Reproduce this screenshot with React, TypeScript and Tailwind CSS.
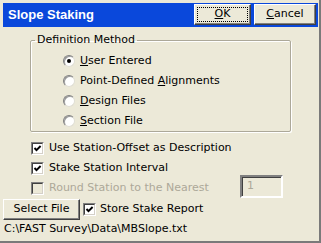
import type { ReactNode } from 'react';

function Btn({ children, focus, className = '' }: { children: ReactNode; focus?: boolean; className?: string }) {
  return (
    <div
      className={`h-[21px] bg-[#ECE9D8] border border-t-white border-l-white border-b-[#404040] border-r-[#404040] shadow-[inset_-1px_-1px_0_#808080] flex items-center justify-center ${className}`}
    >
      {focus ? (
        <span className="w-[51px] h-[15px] flex items-center justify-center border border-dotted border-black">{children}</span>
      ) : (
        children
      )}
    </div>
  );
}

function Check({ checked, disabled }: { checked?: boolean; disabled?: boolean }) {
  return (
    <span className="flex w-[13px] h-[13px] shrink-0 border border-t-[#808080] border-l-[#808080] border-b-white border-r-white">
      <span
        className={`flex w-full h-full items-center justify-center border border-t-[#404040] border-l-[#404040] border-b-[#D4D0C8] border-r-[#D4D0C8] ${
          disabled ? 'bg-[#ECE9D8]' : 'bg-white'
        }`}
      >
        {checked && (
          <svg width="9" height="9" viewBox="0 0 9 9">
            <polyline points="1.5,4 3.5,6.2 7.6,2" fill="none" stroke="black" strokeWidth="1.9" />
          </svg>
        )}
      </span>
    </span>
  );
}

function Radio({ checked }: { checked?: boolean }) {
  return (
    <span className="w-[12px] h-[12px] shrink-0 rounded-full bg-white border border-t-[#808080] border-l-[#808080] border-b-[#E0DED4] border-r-[#E0DED4] shadow-[inset_1px_1px_0_#9A9A9A] flex items-center justify-center">
      {checked && <span className="w-[4px] h-[4px] rounded-full bg-black" />}
    </span>
  );
}

export default function App() {
  const radios: [string, string, string, boolean][] = [
    ['', 'U', 'ser Entered', true],
    ['Point-Defined ', 'A', 'lignments', false],
    ['', 'D', 'esign Files', false],
    ['', 'S', 'ection File', false],
  ];

  return (
    <div className="w-[321px] h-[243px] bg-[#ECE9D8] pl-[3px] pt-[3px] pr-px border-r-2 border-b-2 border-[#7A7A7A] font-['DejaVu_Sans',sans-serif] text-[11px] text-black overflow-hidden">
      {/* Title bar */}
      <div className="h-[24px] bg-[#0A48DB] flex items-start pt-px pr-[2px]">
        <span className="pl-[5px] leading-[22px] text-white font-bold text-[13px] font-['Liberation_Sans',sans-serif]">
          Slope Staking
        </span>
        <div className="ml-auto flex gap-[3px]">
          <Btn focus className="w-[57px]">
            <span><u>O</u>K</span>
          </Btn>
          <Btn className="w-[62px]">
            <span><u>C</u>ancel</span>
          </Btn>
        </div>
      </div>

      {/* Definition Method */}
      <fieldset className="mt-[6px] ml-[27px] w-[261px] border border-[#ACA899] shadow-[inset_1px_1px_0_white,1px_1px_0_white] rounded-[2px]">
        <legend className="ml-[4px] px-[2px] leading-[14px]">Definition Method</legend>
        <div className="pl-[32px] pt-[4px] flex flex-col">
          {radios.map(([pre, key, rest, on]) => (
            <div key={rest} className="h-[20px] flex items-center gap-[5px]">
              <Radio checked={on} />
              <span>
                {pre}
                <u>{key}</u>
                {rest}
              </span>
            </div>
          ))}
        </div>
      </fieldset>

      {/* Options */}
      <div className="pl-[28px] mt-[6px] flex flex-col">
        <div className="h-[20px] flex items-center gap-[5px]">
          <Check checked />
          <span>Use Station-Offset as Description</span>
        </div>
        <div className="h-[20px] flex items-center gap-[5px]">
          <Check checked />
          <span>Stake Station Interval</span>
        </div>
        <div className="h-[20px] w-[252px] flex items-center gap-[5px]">
          <Check disabled />
          <span className="text-[#ACA899]">Round Station to the Nearest</span>
          <div className="ml-auto self-end w-[43px] h-[23px] shrink-0 border-2 border-t-[#808080] border-l-[#808080] border-b-white border-r-white shadow-[inset_1px_1px_0_#404040] px-[5px] flex items-center text-[#ACA899]">
            1
          </div>
        </div>
      </div>

      <div className="mt-px flex items-center">
        <Btn className="w-[77px]">Select File</Btn>
        <span className="ml-[3px]">
          <Check checked />
        </span>
        <span className="ml-[4px]">Store Stake Report</span>
      </div>
      <div className="mt-px pl-px leading-[16px]">C:\FAST Survey\Data\MBSlope.txt</div>
    </div>
  );
}
